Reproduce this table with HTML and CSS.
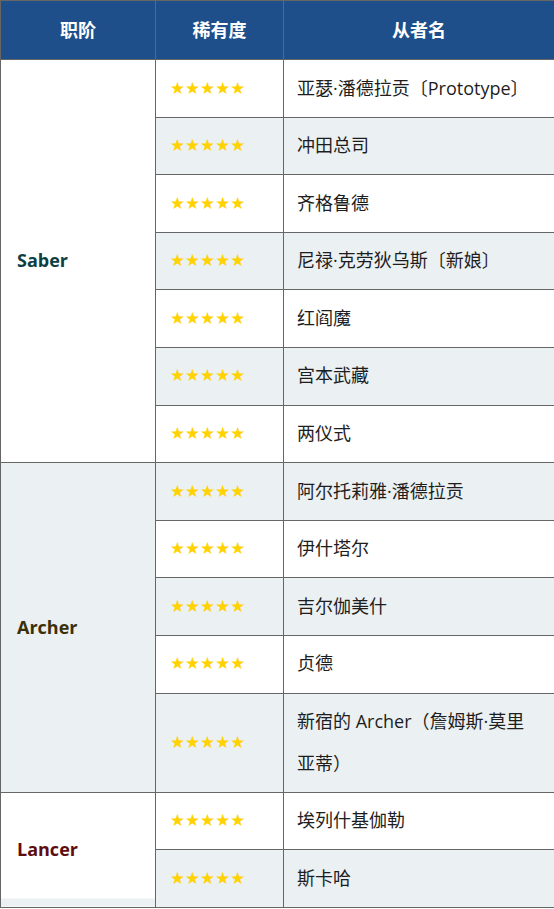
FILE: index.html
```html
<!DOCTYPE html>
<html lang="zh-CN">
<head>
<meta charset="utf-8">
<title>从者列表</title>
<link rel="stylesheet" href="styles.css">
</head>
<body>
<table class="servants">
  <colgroup>
    <col class="c-class">
    <col class="c-rarity">
    <col class="c-name">
  </colgroup>
  <thead>
    <tr><th>职阶</th><th>稀有度</th><th>从者名</th></tr>
  </thead>
  <tbody>
    <tr><td rowspan="7" class="cls saber">Saber</td><td class="stars">★★★★★</td><td class="name">亚瑟·潘德拉贡〔Prototype〕</td></tr>
    <tr><td class="stars">★★★★★</td><td class="name">冲田总司</td></tr>
    <tr><td class="stars">★★★★★</td><td class="name">齐格鲁德</td></tr>
    <tr><td class="stars">★★★★★</td><td class="name">尼禄·克劳狄乌斯〔新娘〕</td></tr>
    <tr><td class="stars">★★★★★</td><td class="name">红阎魔</td></tr>
    <tr><td class="stars">★★★★★</td><td class="name">宫本武藏</td></tr>
    <tr><td class="stars">★★★★★</td><td class="name">两仪式</td></tr>
    <tr><td rowspan="5" class="cls archer">Archer</td><td class="stars">★★★★★</td><td class="name">阿尔托莉雅·潘德拉贡</td></tr>
    <tr><td class="stars">★★★★★</td><td class="name">伊什塔尔</td></tr>
    <tr><td class="stars">★★★★★</td><td class="name">吉尔伽美什</td></tr>
    <tr><td class="stars">★★★★★</td><td class="name">贞德</td></tr>
    <tr><td class="stars">★★★★★</td><td class="name">新宿的 Archer（詹姆斯·莫里亚蒂）</td></tr>
    <tr><td rowspan="2" class="cls lancer">Lancer</td><td class="stars">★★★★★</td><td class="name">埃列什基伽勒</td></tr>
    <tr><td class="stars">★★★★★</td><td class="name">斯卡哈</td></tr>
  </tbody>
</table>
</body>
</html>
```

FILE: styles.css
```css
html, body {
  margin: 0;
  padding: 0;
  background: #ffffff;
}

.servants {
  border-collapse: collapse;
  width: 554px;
  table-layout: fixed;
  font-family: "Open Sans", "Noto Sans CJK SC", sans-serif;
  font-size: 18px;
  color: #1e1e1e;
}

.c-class { width: 155px; }
.c-rarity { width: 128px; }
.c-name { width: 271px; }

.servants th,
.servants td {
  border: 1px solid #666666;
  text-align: left;
  vertical-align: middle;
}

.servants th {
  background: #1f4f8a;
  color: #ffffff;
  font-weight: 700;
  text-align: center;
  height: 58px;
  padding: 0;
  line-height: 20px;
}

.servants td {
  padding: 7.5px 16px;
  line-height: 41.6px;
}

.servants td.name {
  padding-left: 13px;
  padding-right: 14px;
}

.servants tbody tr:nth-child(even) {
  background: #ebf0f3;
}

.servants .cls {
  font-weight: 700;
  font-size: 18px;
}

.saber { color: #0d3f44; }
.archer { color: #3b3008; }
.lancer {
  color: #5e0c0c;
  background: linear-gradient(to bottom, #ffffff calc(100% - 8px), #ebf0f3 0);
}

.servants td.stars {
  color: #ffd200;
  font-family: "DejaVu Sans", sans-serif;
  font-size: 16.8px;
  padding-left: 14px;
}
```
